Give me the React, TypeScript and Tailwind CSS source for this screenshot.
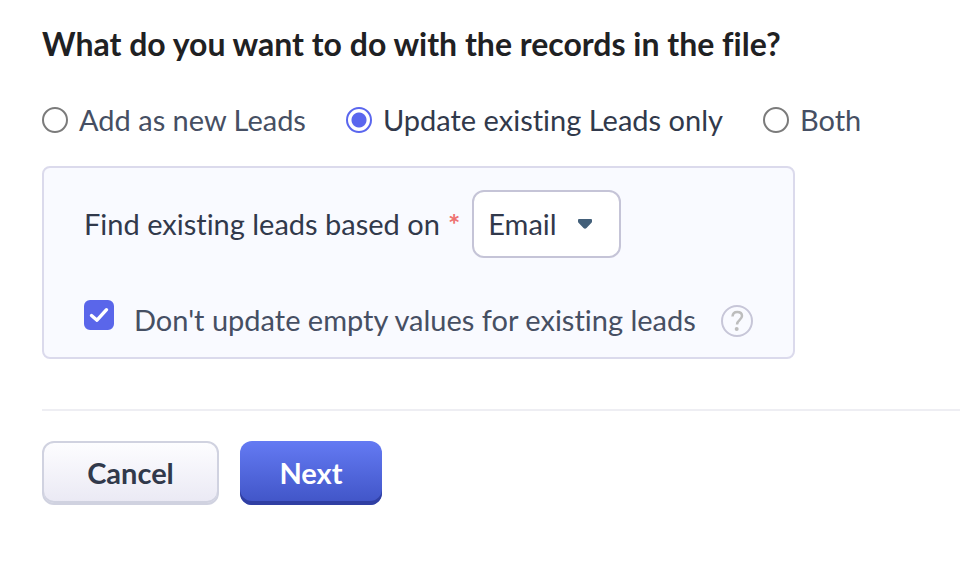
import { useState } from "react";

const MODES = [
  { value: "add", label: "Add as new Leads" },
  { value: "update", label: "Update existing Leads only" },
  { value: "both", label: "Both" },
];

const KEYS = ["Email", "Phone", "Lead ID"];

function ModeRadio({ value, label, checked, onSelect }: {
  value: string;
  label: string;
  checked: boolean;
  onSelect: (value: string) => void;
}) {
  return (
    <label className="flex items-center gap-[11px] whitespace-nowrap text-[#464f63] has-checked:text-[#31394b]">
      <input
        type="radio"
        name="mode"
        value={value}
        checked={checked}
        onChange={() => onSelect(value)}
        className="size-[26px] shrink-0 appearance-none rounded-full border-2 border-[#7b7b7b] bg-white checked:border-[#5a66ee] checked:bg-[radial-gradient(circle,#5a66ee_7px,white_8px)]"
      />
      {label}
    </label>
  );
}

export default function App() {
  const [mode, setMode] = useState("update");
  const [skipEmpty, setSkipEmpty] = useState(true);

  return (
    <main className="bg-white pt-6 pl-[42px] font-['Lato','Liberation_Sans',sans-serif] text-[29px] leading-10 text-[#31394b] [font-variant-ligatures:none]">
      <h1 className="text-[32px] font-bold text-[#1f2123]">
        What do you want to do with the records in the file?
      </h1>

      <div role="radiogroup" aria-label="Import mode" className="mt-9 flex gap-10">
        {MODES.map((m) => (
          <ModeRadio key={m.value} value={m.value} label={m.label} checked={mode === m.value} onSelect={setMode} />
        ))}
      </div>

      <section className="mt-[26px] max-w-[753px] rounded-lg border-2 border-[#dbdaec] bg-[#f9faff] px-10 pt-[22px] pb-[17px]">
        <div className="flex items-center">
          <label htmlFor="match-key" className="flex whitespace-nowrap">
            Find existing leads based on
            <span className="ml-2 font-bold text-[#ee7170]">*</span>
          </label>
          <div className="relative ml-3">
            <select
              id="match-key"
              className="block h-[68px] w-[149px] appearance-none rounded-xl border-2 border-[#c5c4d7] bg-white pl-[14px] text-[#31394b]"
            >
              {KEYS.map((k) => (
                <option key={k}>{k}</option>
              ))}
            </select>
            <svg viewBox="0 0 16 12" aria-hidden="true" className="pointer-events-none absolute top-7 right-7 h-3 w-4 text-[#43607a]">
              <path d="M2 1h12q1 0 1 1v1.500q0 .7-.5 1.200L9.500 10q-1.500 1.500-3 0L1.500 4.700Q1 4.200 1 3.500V2q0-1 1-1Z" fill="currentColor" />
            </svg>
          </div>
        </div>

        <div className="mt-[42px] flex items-start text-[#464f63]">
          <span className="relative size-[30px] shrink-0">
            <input
              id="skip-empty"
              type="checkbox"
              checked={skipEmpty}
              onChange={(e) => setSkipEmpty(e.target.checked)}
              className="peer block size-[30px] appearance-none rounded-md border-2 border-[#c5c4d7] bg-white checked:border-[#5a66ea] checked:bg-[#5a66ea]"
            />
            <svg viewBox="0 0 30 30" fill="none" aria-hidden="true" className="pointer-events-none invisible absolute inset-0 peer-checked:visible">
              <path d="m7.500 15.500 5.500 4.700 9.500-10.500" stroke="white" strokeWidth="3.400" strokeLinecap="round" strokeLinejoin="round" />
            </svg>
          </span>
          <label htmlFor="skip-empty" className="ml-5 whitespace-nowrap">
            Don't update empty values for existing leads
          </label>
          <button
            type="button"
            aria-label="Help"
            className="mt-[5px] ml-auto flex size-8 shrink-0 items-center justify-center rounded-full border-2 border-[#c7c6d8] text-[#bdbdbd]"
          >
            <svg viewBox="0 0 32 32" fill="none" aria-hidden="true" className="size-8 shrink-0">
              <path d="M11.500 11.500c.2-2.900 2-4.500 4.700-4.500 2.900 0 4.800 1.600 4.800 4.100 0 3.700-5 3.900-5 8.400" stroke="currentColor" strokeWidth="2.500" />
              <circle cx="15.700" cy="24" r="2" fill="currentColor" />
            </svg>
          </button>
        </div>
      </section>

      <hr className="mt-[50px] border-t-2 border-[#eeeef3]" />

      <div className="mt-[30px] flex gap-[21px] pb-10 font-bold">
        <button
          type="button"
          className="h-16 w-[177px] rounded-xl border-2 border-[#d0d2e0] bg-linear-to-b from-[#fdfdff] to-[#eae9f4] shadow-[inset_0_-2px_0_#d0d2e0]"
        >
          Cancel
        </button>
        <button
          type="button"
          className="h-16 w-[142px] rounded-xl bg-linear-to-b from-[#647af3] to-[#4054c6] text-white shadow-[inset_0_-4px_0_#303fa3]"
        >
          Next
        </button>
      </div>
    </main>
  );
}
